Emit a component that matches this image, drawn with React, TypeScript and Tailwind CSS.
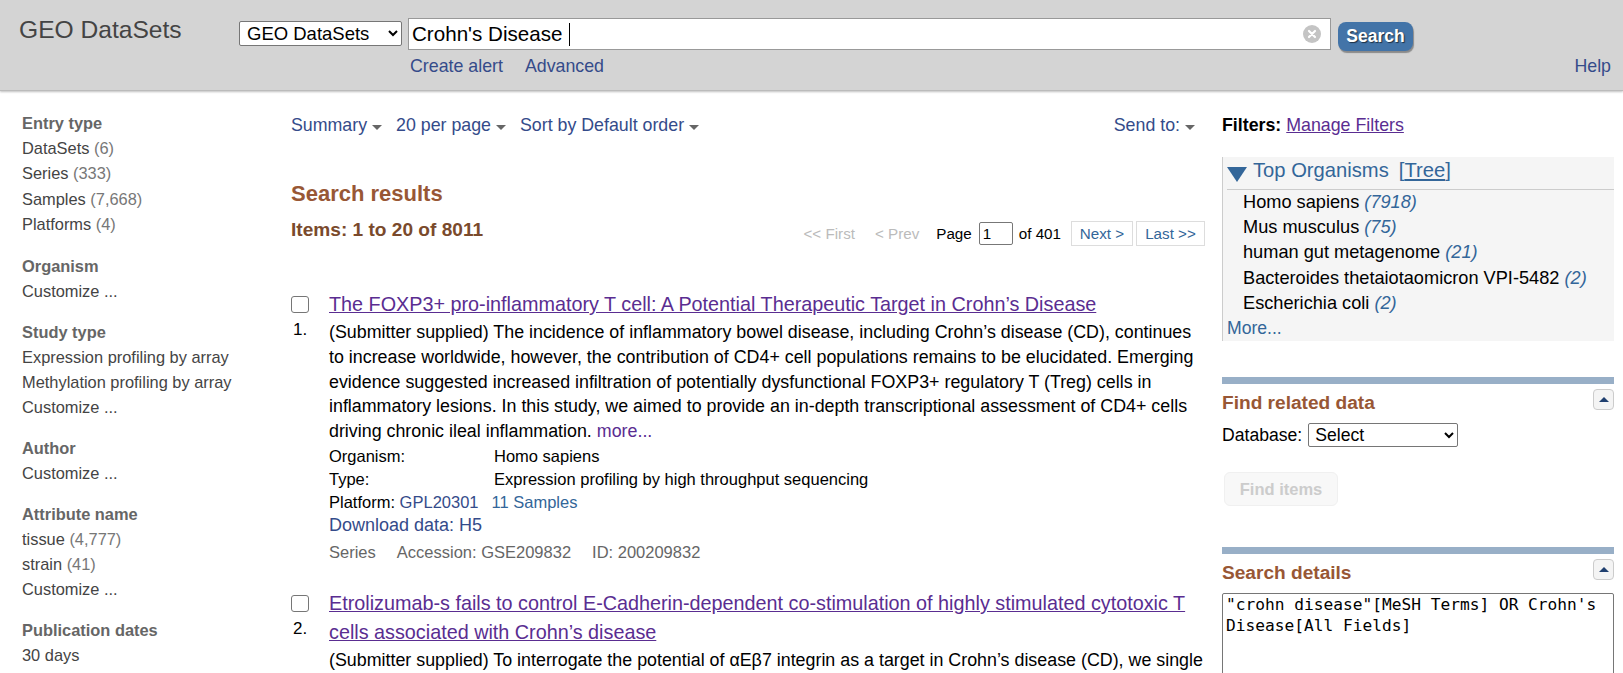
import React from 'react';

const Caret = () => (
    <span className="ml-[5px] inline-block w-0 h-0 align-middle border-x-[5px] border-x-transparent border-t-[5px] border-t-[#666] relative top-[1px]" />
);

const FacetGroup = ({ title, items, first }: { title: string; items: [string, string?][]; first?: boolean }) => (
    <div className={first ? 'mb-[17px]' : 'mb-[16px]'}>
        <h3 className="font-bold text-[16.4px] leading-[25px] text-[#666]">{title}</h3>
        {items.map(([label, count]) => (
            <div key={label} className={first ? 'text-[16.4px] leading-[25.3px] text-[#444]' : 'text-[16.4px] leading-[25px] text-[#444]'}>
                {label}
                {count && <span className="text-[#777]"> {count}</span>}
            </div>
        ))}
    </div>
);

const CollapseButton = () => (
    <div className="absolute right-0 top-[5px] w-[21px] h-[21px] border border-[#ccc] rounded-[4px] bg-[#f4f4f4] flex items-center justify-center">
        <span className="w-0 h-0 border-x-[5px] border-x-transparent border-b-[5px] border-b-[#1f3f6f]" />
    </div>
);

const OrganismRow = ({ name, count }: { name: string; count: string }) => (
    <div className="pl-[16px] text-[18.2px] leading-[25.2px] text-black">
        {name} <em className="text-[#336699]">{count}</em>
    </div>
);

const ResultMarker = ({ n }: { n: string }) => (
    <div className="w-[38px] shrink-0">
        <div className="w-[18px] h-[17px] mt-[6px] border border-[#767676] rounded-[3px] bg-white" />
        <div className="mt-[5px] ml-[2px] text-[17px] leading-[24px] text-black">{n}</div>
    </div>
);

const App: React.FC = () => {
    return (
        <div className="h-[673px] w-[1623px] overflow-hidden bg-white font-['Liberation_Sans',Arial,sans-serif]">
            {/* Search bar */}
            <div className="h-[91px] bg-[#d4d4d4] border-b border-[#bbb] shadow-[0_1px_2px_rgba(0,0,0,0.25)] flex relative">
                <div className="w-[239px] pl-[19px] pt-[14px] text-[24.6px] leading-[32px] text-[#444]">GEO DataSets</div>
                <div className="pt-[18px]">
                    <div className="flex items-start">
                        <select className="mt-[3px] w-[163px] h-[25px] bg-white border border-[#767676] rounded-[2px] text-[18.5px] text-black pl-[3px]">
                            <option>GEO DataSets</option>
                        </select>
                        <div className="ml-[6px] w-[923px] h-[32px] bg-white border border-[#999] flex items-center pl-[3px] pr-[9px]">
                            <span className="text-[20.6px] text-black">Crohn's Disease</span>
                            <span className="ml-[7px] w-px h-[23px] bg-black" />
                            <svg className="ml-auto" width="18" height="18" viewBox="0 0 18 18">
                                <circle cx="9" cy="9" r="9" fill="#c4c4c4" />
                                <path d="M6 6l6 6M12 6l-6 6" stroke="#fff" strokeWidth="2.2" strokeLinecap="round" />
                            </svg>
                        </div>
                        <button className="ml-[7px] mt-[4px] w-[75px] h-[29px] rounded-[8px] bg-[#4374a8] text-white font-bold text-[17.5px] shadow-[1px_2px_1px_rgba(0,0,0,0.35)] [text-shadow:1px_1px_1px_rgba(0,0,0,0.6)]">Search</button>
                    </div>
                    <div className="flex gap-[22px] ml-[171px] mt-[4px] text-[17.8px] leading-[22px] text-[#344b8a]">
                        <span>Create alert</span>
                        <span>Advanced</span>
                    </div>
                </div>
                <span className="absolute right-[12px] top-[55px] text-[17.8px] leading-[22px] text-[#344b8a]">Help</span>
            </div>

            <div className="flex">
                {/* Facets */}
                <div className="w-[291px] pl-[22px] pt-[20px] shrink-0">
                    <FacetGroup first title="Entry type" items={[['DataSets', '(6)'], ['Series', '(333)'], ['Samples', '(7,668)'], ['Platforms', '(4)']]} />
                    <FacetGroup title="Organism" items={[['Customize ...']]} />
                    <FacetGroup title="Study type" items={[['Expression profiling by array'], ['Methylation profiling by array'], ['Customize ...']]} />
                    <FacetGroup title="Author" items={[['Customize ...']]} />
                    <FacetGroup title="Attribute name" items={[['tissue', '(4,777)'], ['strain', '(41)'], ['Customize ...']]} />
                    <FacetGroup title="Publication dates" items={[['30 days']]} />
                </div>

                {/* Results */}
                <div className="w-[914px] shrink-0">
                    <div className="pt-[22px] pr-[10px] flex text-[17.8px] leading-[25px] text-[#344b8a]">
                        <span>Summary<Caret /></span>
                        <span className="ml-[14px]">20 per page<Caret /></span>
                        <span className="ml-[14px]">Sort by Default order<Caret /></span>
                        <span className="ml-auto">Send to:<Caret /></span>
                    </div>
                    <h2 className="mt-[43px] font-bold text-[22px] leading-[26px] text-[#985735]">Search results</h2>
                    <div className="flex items-start mt-[10px]">
                        <div className="font-bold text-[19.1px] leading-[26px] text-[#7a4a2c]">Items: 1 to 20 of 8011</div>
                        <div className="ml-auto flex items-center text-[15.2px] leading-[24px] mt-[4px]">
                            <span className="text-[#bbb]">&lt;&lt; First</span>
                            <span className="ml-[20px] text-[#bbb]">&lt; Prev</span>
                            <span className="ml-[17px] text-black">Page</span>
                            <span className="ml-[7px] w-[34px] h-[23px] border border-[#777] rounded-[2px] pl-[3px] leading-[21px] text-black">1</span>
                            <span className="ml-[6px] text-black">of 401</span>
                            <span className="ml-[10px] w-[62px] h-[25px] border border-[#ddd] text-center text-[#336699]">Next &gt;</span>
                            <span className="ml-[3px] w-[69px] h-[25px] border border-[#ddd] text-center text-[#336699]">Last &gt;&gt;</span>
                        </div>
                    </div>

                    <div className="mt-[44px] flex">
                        <ResultMarker n="1." />
                        <div className="flex-1">
                            <a className="block text-[19.8px] leading-[29px] text-[#5a2d91] underline">The FOXP3+ pro-inflammatory T cell: A Potential Therapeutic Target in Crohn’s Disease</a>
                            <p className="mt-[1px] text-[17.85px] leading-[24.8px] text-black">
                                (Submitter supplied) The incidence of inflammatory bowel disease, including Crohn’s disease (CD), continues to increase worldwide, however, the contribution of CD4+ cell populations remains to be elucidated. Emerging evidence suggested increased infiltration of potentially dysfunctional FOXP3+ regulatory T (Treg) cells in inflammatory lesions. In this study, we aimed to provide an in-depth transcriptional assessment of CD4+ cells driving chronic ileal inflammation. <span className="text-[#5a2d91]">more...</span>
                            </p>
                            <div className="mt-[1px] flex text-[16.5px] leading-[23px] text-black">
                                <span className="w-[165px]">Organism:</span><span>Homo sapiens</span>
                            </div>
                            <div className="flex text-[16.5px] leading-[23px] text-black">
                                <span className="w-[165px]">Type:</span><span>Expression profiling by high throughput sequencing</span>
                            </div>
                            <div className="text-[16.5px] leading-[22px] text-black">
                                Platform: <span className="text-[#344b8a]">GPL20301</span><span className="ml-[13px] text-[#336699]">11 Samples</span>
                            </div>
                            <div className="text-[18px] leading-[25px] text-[#344b8a]">Download data: H5</div>
                            <div className="mt-[3px] text-[16.5px] leading-[23px] text-[#666]">
                                Series<span className="ml-[21px]">Accession: GSE209832</span><span className="ml-[21px]">ID: 200209832</span>
                            </div>
                        </div>
                    </div>

                    <div className="mt-[25px] flex">
                        <ResultMarker n="2." />
                        <div className="flex-1">
                            <a className="block text-[19.8px] leading-[29px] text-[#5a2d91] underline">Etrolizumab-s fails to control E-Cadherin-dependent co-stimulation of highly stimulated cytotoxic T cells associated with Crohn’s disease</a>
                            <p className="mt-[1px] text-[17.85px] leading-[24.8px] text-black">
                                (Submitter supplied) To interrogate the potential of αEβ7 integrin as a target in Crohn’s disease (CD), we single
                            </p>
                        </div>
                    </div>
                </div>

                {/* Sidebar */}
                <div className="ml-[17px] w-[392px] shrink-0 pt-[22px]">
                    <div className="text-[17.8px] leading-[25px] text-black">
                        <b>Filters:</b> <span className="text-[#5a2d91] underline">Manage Filters</span>
                    </div>
                    <div className="mt-[19px] bg-[#f5f5f5] border-l border-[#ccc] pl-[4px] h-[184px]">
                        <div className="h-[33px] pb-[5px] border-b border-[#ccc] flex items-center text-[20.2px] text-[#336699]">
                            <span className="w-0 h-0 border-x-[10px] border-x-transparent border-t-[15px] border-t-[#336699] mt-[8px] mr-[6px]" />
                            Top Organisms
                            <span className="ml-[10px]">[<span className="underline">Tree</span>]</span>
                        </div>
                        <OrganismRow name="Homo sapiens" count="(7918)" />
                        <OrganismRow name="Mus musculus" count="(75)" />
                        <OrganismRow name="human gut metagenome" count="(21)" />
                        <OrganismRow name="Bacteroides thetaiotaomicron VPI-5482" count="(2)" />
                        <OrganismRow name="Escherichia coli" count="(2)" />
                        <div className="text-[17.6px] leading-[25px] text-[#336699]">More...</div>
                    </div>

                    <div className="mt-[36px] border-t-[7px] border-[#98afc7] relative h-[170px]">
                        <h3 className="pt-[6px] font-bold text-[19.1px] leading-[26px] text-[#985735]">Find related data</h3>
                        <CollapseButton />
                        <div className="mt-[6px] flex items-center text-[17.6px] text-black">
                            Database:
                            <select className="ml-[6px] w-[150px] h-[24px] bg-white border border-[#767676] rounded-[2px] text-[17.6px] pl-[2px]">
                                <option>Select</option>
                            </select>
                        </div>
                        <div className="mt-[24px] ml-[2px] w-[114px] h-[34px] rounded-[6px] bg-[#f8f8f8] border border-[#f0f0f0] text-center font-bold text-[16.5px] leading-[32px] text-[#ccc]">Find items</div>
                    </div>

                    <div className="border-t-[7px] border-[#98afc7] relative">
                        <h3 className="pt-[6px] font-bold text-[19.1px] leading-[26px] text-[#985735]">Search details</h3>
                        <CollapseButton />
                        <div className="mt-[7px] h-[120px] border border-[#767676] rounded-[2px] px-[3px] pt-[1px] font-['DejaVu_Sans_Mono',monospace] text-[16.2px] leading-[20.7px] text-black">
                            "crohn disease"[MeSH Terms] OR Crohn's Disease[All Fields]
                        </div>
                    </div>
                </div>
            </div>
        </div>
    );
};

export default App;
